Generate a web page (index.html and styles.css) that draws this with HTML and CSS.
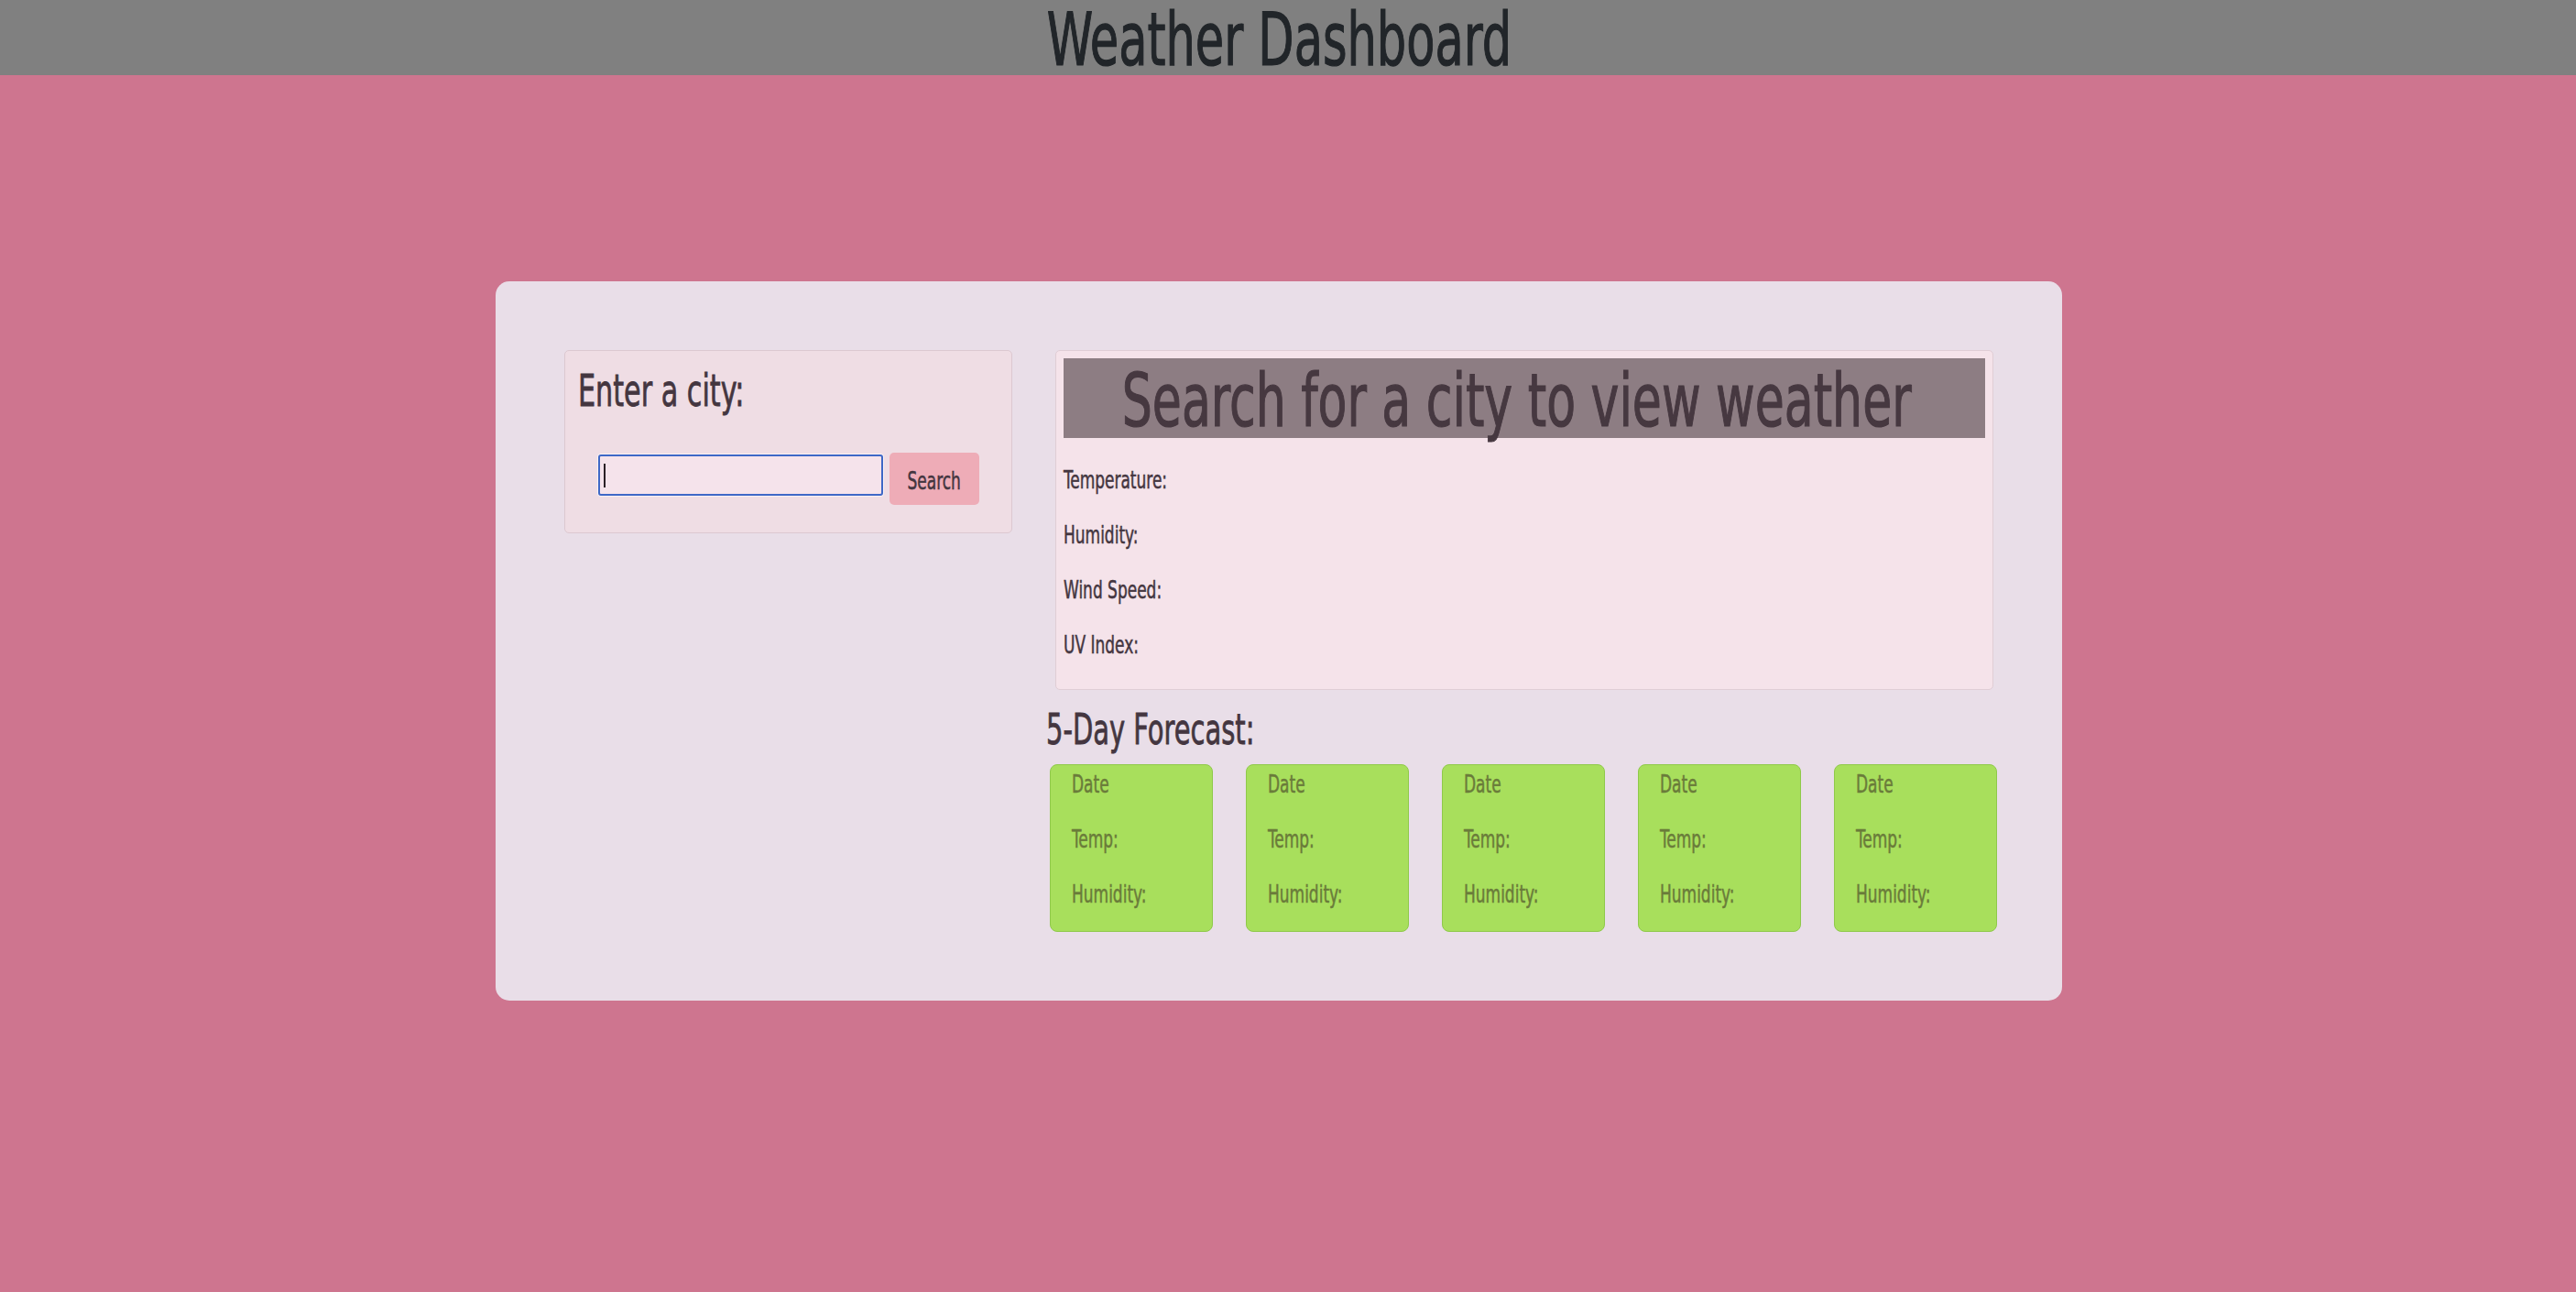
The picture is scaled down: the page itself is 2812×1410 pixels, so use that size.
FILE: index.html
```html
<!DOCTYPE html>
<html lang="en">
<head>
<meta charset="utf-8">
<title>Weather Dashboard</title>
<link rel="stylesheet" href="styles.css">
</head>
<body>
<header class="site-header">
  <h1 class="site-title"><span class="narrow">Weather Dashboard</span></h1>
</header>
<main class="dashboard">
  <section class="search-col">
    <div class="search-panel">
      <h3 class="panel-heading"><span class="narrow">Enter a city:</span></h3>
      <form class="search-form">
        <input class="city-input" type="text" autofocus>
        <button class="search-btn" type="button"><span class="narrow">Search</span></button>
      </form>
    </div>
  </section>
  <section class="weather-col">
    <div class="current-panel">
      <h2 class="current-title"><span class="narrow">Search for a city to view weather</span></h2>
      <div class="current-stats">
        <p class="stat"><span class="narrow">Temperature:</span></p>
        <p class="stat"><span class="narrow">Humidity:</span></p>
        <p class="stat"><span class="narrow">Wind Speed:</span></p>
        <p class="stat"><span class="narrow">UV Index:</span></p>
      </div>
    </div>
    <div class="forecast">
      <h3 class="forecast-heading"><span class="narrow">5-Day Forecast:</span></h3>
      <div class="forecast-row">
        <div class="day-card"><p class="day-line"><span class="narrow">Date</span></p><p class="day-line"><span class="narrow">Temp:</span></p><p class="day-line"><span class="narrow">Humidity:</span></p></div>
        <div class="day-card"><p class="day-line"><span class="narrow">Date</span></p><p class="day-line"><span class="narrow">Temp:</span></p><p class="day-line"><span class="narrow">Humidity:</span></p></div>
        <div class="day-card"><p class="day-line"><span class="narrow">Date</span></p><p class="day-line"><span class="narrow">Temp:</span></p><p class="day-line"><span class="narrow">Humidity:</span></p></div>
        <div class="day-card"><p class="day-line"><span class="narrow">Date</span></p><p class="day-line"><span class="narrow">Temp:</span></p><p class="day-line"><span class="narrow">Humidity:</span></p></div>
        <div class="day-card"><p class="day-line"><span class="narrow">Date</span></p><p class="day-line"><span class="narrow">Temp:</span></p><p class="day-line"><span class="narrow">Humidity:</span></p></div>
      </div>
    </div>
  </section>
</main>
</body>
</html>
```
FILE: styles.css
```css
* { box-sizing: border-box; }

body {
  margin: 0;
  background: #ce758f;
  font-family: "DejaVu Sans Condensed", "DejaVu Sans", sans-serif;
  color: #443640;
}

/* condensed look: the text is squeezed horizontally */
.narrow {
  display: inline-block;
  white-space: nowrap;
  transform: scaleX(0.7);
  transform-origin: 0 50%;
}

.site-header {
  height: 82px;
  background: #808080;
}

.site-title {
  display: flex;
  justify-content: center;
  margin: 0;
  padding: 2px 20px 0 0;
  font-size: 81px;
  font-weight: normal;
  line-height: 82px;
  color: #212529;
  -webkit-text-stroke: 1.2px #212529;
}

.site-title .narrow,
.current-title .narrow,
.search-btn .narrow { transform-origin: 50% 50%; }

.current-title .narrow { transform: scaleX(0.715); }

.dashboard {
  display: flex;
  gap: 47px;
  width: 1710px;
  margin: 225px 0 0 541px;
  padding: 75px;
  background: #e9dee8;
  border-radius: 15px;
}

.search-col { width: 489px; flex: none; }
.weather-col { width: 1024px; flex: none; }

.search-panel {
  background: #efdde4;
  border: 1px solid #dcc8d0;
  border-radius: 5px;
  padding: 13px 14px 30px;
}

.panel-heading {
  margin: 0;
  font-weight: normal;
  font-size: 48px;
  line-height: 60px;
  -webkit-text-stroke: 0.8px #443640;
}

.search-form {
  display: flex;
  justify-content: center;
  align-items: flex-start;
  gap: 7px;
  margin-top: 38px;
}

.city-input {
  width: 311px;
  height: 45px;
  margin-top: 2px;
  background: linear-gradient(#2a1f26, #2a1f26) 4px 50% / 2px 26px no-repeat, #f5e3eb;
  border: 2px solid #3e68c6;
  border-radius: 3px;
  box-shadow: 0 0 0 1px rgba(255,255,255,0.6);
  outline: none;
  font: inherit;
  padding: 0 8px;
  color: #2a1f26;
  caret-color: transparent;
}

.search-btn {
  display: flex;
  justify-content: center;
  align-items: center;
  width: 98px;
  height: 57px;
  border: none;
  border-radius: 5px;
  background: #eeacb7;
  color: #443640;
  font-family: inherit;
  font-size: 27px;
  line-height: 40px;
  padding: 4px 0 0;
  -webkit-text-stroke: 0.5px #443640;
}

.current-panel {
  background: #f5e3ea;
  border: 1px solid #e0cdd5;
  border-radius: 5px;
  padding: 8px;
}

.current-title {
  display: flex;
  justify-content: center;
  align-items: flex-start;
  margin: 0;
  height: 87px;
  padding-right: 17px;
  background: #8d7d83;
  font-size: 81px;
  font-weight: normal;
  line-height: 93px;
  color: #463840;
  -webkit-text-stroke: 1.2px #463840;
}

.current-stats { padding: 16px 0 10px; }

.stat {
  margin: 0;
  font-size: 27px;
  line-height: 60px;
  -webkit-text-stroke: 0.5px #443640;
}

.forecast { margin-left: -6px; width: 1036px; }

.forecast-heading {
  margin: 13px 0 8px -4px;
  font-weight: normal;
  font-size: 46px;
  line-height: 60px;
  -webkit-text-stroke: 0.8px #443640;
}

.forecast-row {
  display: flex;
  gap: 36px;
}

.day-card {
  width: 178px;
  height: 183px;
  background: #a8df5c;
  border: 1px solid #8fc94a;
  border-radius: 8px;
  padding: 1px 0 0 23px;
  color: #6a7b3a;
}

.day-line {
  margin: 0 0 20px;
  font-size: 27px;
  line-height: 40px;
  -webkit-text-stroke: 0.5px #6a7b3a;
}
```
